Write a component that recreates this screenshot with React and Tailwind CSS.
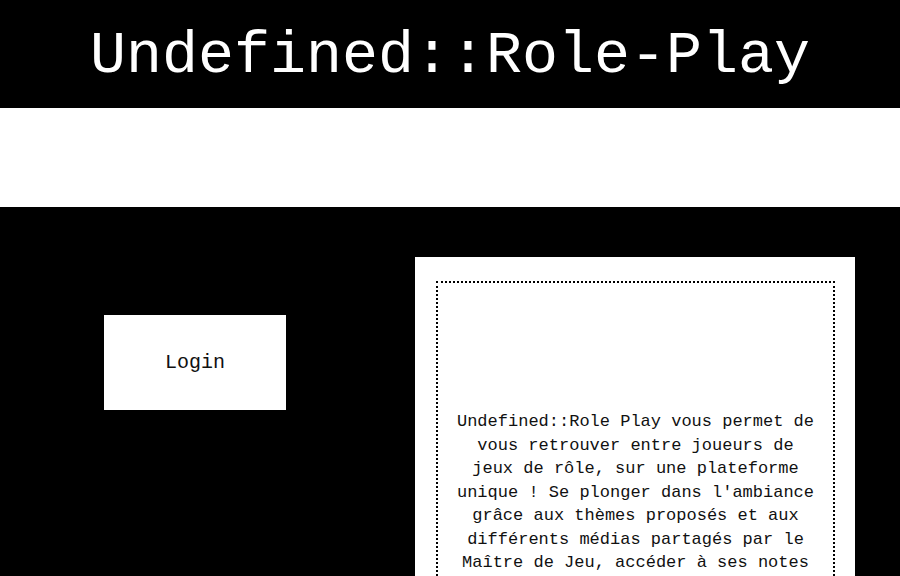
export default function App() {
  return (
    <div className="min-h-screen bg-black font-['Liberation_Mono',_'Courier_New',_monospace]">
      <header className="flex h-[108px] items-center justify-center bg-black pt-[4px]">
        <h1 className="text-[60px] leading-none text-white">Undefined::Role-Play</h1>
      </header>

      <div className="h-[99px] bg-white"></div>

      <main className="flex items-start bg-black pt-[50px]">
        <div className="ml-[104px] mt-[58px] flex h-[95px] w-[182px] items-center justify-center bg-white">
          <span className="text-[20px] text-[#111]">Login</span>
        </div>

        <section className="ml-[129px] w-[440px] bg-white pb-6 pl-[21px] pr-[20px] pt-[24px]">
          <div className="border-2 border-dotted border-black px-[18px] pb-6 pt-[127px]">
            <p className="text-center text-[17px] leading-[23.5px] text-[#111]">
              Undefined::Role Play vous permet de vous retrouver entre joueurs de jeux de rôle, sur une plateforme
              unique ! Se plonger dans l'ambiance grâce aux thèmes proposés et aux différents médias partagés par le
              Maître de Jeu, accéder à ses notes et à sa fiche de personnage à tout moment.
            </p>
          </div>
        </section>
      </main>
    </div>
  );
}
